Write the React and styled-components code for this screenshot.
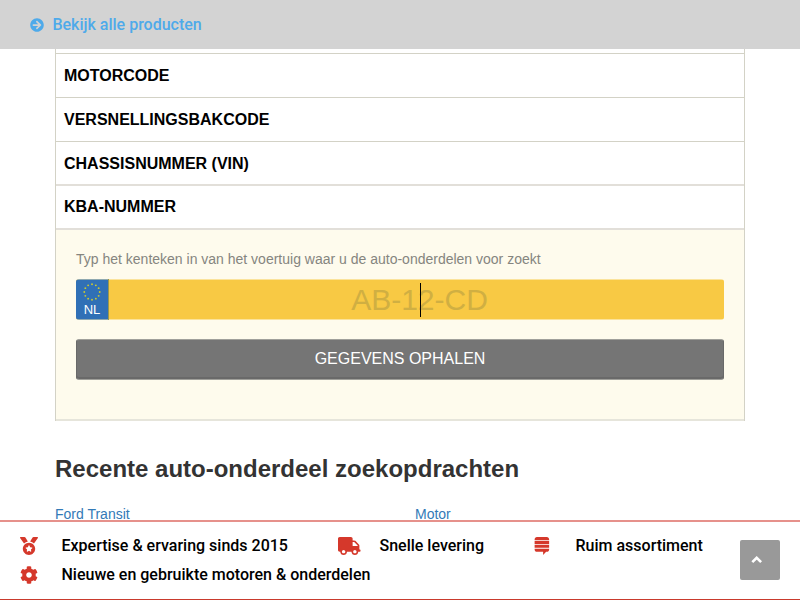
import React from "react";
import styled, { createGlobalStyle } from "styled-components";
import {
  FaArrowCircleRight,
  FaMedal,
  FaTruck,
  FaStackExchange,
  FaCog,
} from "react-icons/fa";

const GlobalStyle = createGlobalStyle`
  * { box-sizing: border-box; }
  body { margin: 0; background: #fff; overflow: hidden; }
`;

const Page = styled.div`
  width: 800px;
  height: 600px;
  overflow: hidden;
  display: flex;
  flex-direction: column;
  font-family: "Liberation Sans", Arial, sans-serif;
`;

const TopBar = styled.header`
  flex: 0 0 49px;
  display: flex;
  align-items: center;
  padding-left: 30px;
  background: #d3d3d3;
`;

const TopLink = styled.a`
  display: flex;
  align-items: center;
  gap: 8.4px;
  color: #4eaaea;
  font: 500 16px/20px Roboto, sans-serif;
`;

const Content = styled.main`
  flex: 0 0 471px;
  overflow: hidden;
  padding: 0 55px;
`;

const SearchBox = styled.section`
  height: 372px;
  display: flex;
  flex-direction: column;
  border: solid #d3d2c6;
  border-width: 0 1px;
`;

const Spacer = styled.div`
  flex: 0 0 5px;
  border-bottom: 1px solid #d3d2c6;
`;

const Tab = styled.div`
  flex: 0 0 44px;
  padding: ${(p) => p.$top ?? 2}px 0 0 8px;
  border-bottom: ${(p) => (p.$soft ? "2px solid #e2dfd9" : "1px solid #d3d2c6")};
  color: #000;
  font-size: 16px;
  font-weight: 700;
  line-height: 40px;
`;

const Panel = styled.div`
  flex: 1;
  padding: 19px 20px 0;
  background: #fefbed;
  border-bottom: 2px solid #e6e5db;
`;

const Hint = styled.p`
  margin: 0 0 10px;
  color: #85857f;
  font-size: 14px;
  line-height: 20px;
`;

const Plate = styled.div`
  display: flex;
  height: 41px;
  overflow: hidden;
  border-radius: 3px;
  background: linear-gradient(#fbe39b 1px, #f8c944 1px, #f8c944 40px, #fbe39b 40px);
`;

const Country = styled.div`
  flex: 0 0 33px;
  display: flex;
  flex-direction: column;
  align-items: center;
  padding-top: 4px;
  background: linear-gradient(#8fa9b0 1px, #3070b6 1px, #3070b6 40px, #8fa9b0 40px);
  border-right: 1px solid #97974e;
  color: #fff;
  font-size: 13px;
  line-height: 17px;
`;

const PlateField = styled.div`
  flex: 1;
  display: flex;
  align-items: center;
  justify-content: center;
  padding-right: 26px;
`;

const PlateText = styled.span`
  position: relative;
  display: block;
  margin-left: 32px;
  color: #d0af42;
  font-size: 30px;
  line-height: 40px;
`;

const Caret = styled.i`
  position: absolute;
  left: 69px;
  top: 3px;
  width: 1px;
  height: 34px;
  background: #000;
`;

const FetchButton = styled.button`
  display: block;
  width: 100%;
  height: 41px;
  margin: 19px 0 0;
  padding: 0 0 2px;
  border: 1px solid #696969;
  border-top-color: #a0a09b;
  border-bottom-color: #a0a09b;
  border-radius: 3px;
  background: #757575;
  box-shadow: inset 0 -2px 0 #696969;
  color: #fff;
  font: 16px/20px "Liberation Sans", Arial, sans-serif;
`;

const Heading = styled.h2`
  margin: 33px 0 0;
  color: #333;
  font-size: 24px;
  font-weight: 700;
  line-height: 30px;
`;

const Links = styled.div`
  display: grid;
  grid-template-columns: 360px 1fr;
  margin-top: 20px;
`;

const RecentLink = styled.a`
  color: #337ab7;
  font-size: 14px;
  line-height: 20px;
`;

const Footer = styled.footer`
  flex: 0 0 80px;
  display: flex;
  border-top: 2px solid #e6918b;
  border-bottom: 1px solid #c93a2d;
`;

const Benefits = styled.div`
  flex: 0 0 740px;
  display: grid;
  grid-template-columns: 318px 196px 1fr;
  grid-template-rows: 29px 29px;
  padding: 9px 0 0 20px;
`;

const Benefit = styled.div`
  display: grid;
  grid-template-columns: 41.5px 1fr;
  align-items: center;
  grid-column: ${(p) => (p.$wide ? "1 / -1" : "auto")};
  color: #000;
  font: 500 16px/29px Roboto, sans-serif;
  white-space: nowrap;

  svg {
    color: #d5382b;
    width: ${(p) => p.$icon || 18}px;
    height: 18px;
  }
`;

const ToTop = styled.button`
  width: 40px;
  height: 40px;
  margin-top: 18px;
  padding: 0 0 1px 11px;
  display: flex;
  align-items: center;
  border: 0;
  border-radius: 2px;
  background: #999;
  color: #fff;
`;

const stars = Array.from({ length: 12 }, (_, i) => {
  const a = (i * Math.PI) / 6;
  return [9 + 7.7 * Math.sin(a), 9 - 7.7 * Math.cos(a)];
});

function EuStars() {
  return (
    <svg width="18" height="18" viewBox="0 0 18 18">
      {stars.map(([x, y], i) => (
        <circle key={i} cx={x} cy={y} r="0.95" fill="#c9c832" />
      ))}
    </svg>
  );
}

function ChevronUp() {
  return (
    <svg width="12" height="8" viewBox="0 0 12 8">
      <path d="M1.3 6.2 5.7 1.8 10.1 6.2" fill="none" stroke="currentColor" strokeWidth="2.6" />
    </svg>
  );
}

export default function App() {
  return (
    <Page>
      <GlobalStyle />
      <TopBar>
        <TopLink>
          <FaArrowCircleRight size={14} />
          Bekijk alle producten
        </TopLink>
      </TopBar>
      <Content>
        <SearchBox>
          <Spacer />
          <Tab>MOTORCODE</Tab>
          <Tab>VERSNELLINGSBAKCODE</Tab>
          <Tab $soft>CHASSISNUMMER (VIN)</Tab>
          <Tab $soft $top={1}>KBA-NUMMER</Tab>
          <Panel>
            <Hint>Typ het kenteken in van het voertuig waar u de auto-onderdelen voor zoekt</Hint>
            <Plate>
              <Country>
                <EuStars />
                NL
              </Country>
              <PlateField>
                <PlateText>
                  AB-12-CD
                  <Caret />
                </PlateText>
              </PlateField>
            </Plate>
            <FetchButton>GEGEVENS OPHALEN</FetchButton>
          </Panel>
        </SearchBox>
        <Heading>Recente auto-onderdeel zoekopdrachten</Heading>
        <Links>
          <RecentLink>Ford Transit</RecentLink>
          <RecentLink>Motor</RecentLink>
        </Links>
      </Content>
      <Footer>
        <Benefits>
          <Benefit><FaMedal />Expertise &amp; ervaring sinds 2015</Benefit>
          <Benefit $icon={22.5}><FaTruck />Snelle levering</Benefit>
          <Benefit $icon={15.75}><FaStackExchange />Ruim assortiment</Benefit>
          <Benefit $wide><FaCog />Nieuwe en gebruikte motoren &amp; onderdelen</Benefit>
        </Benefits>
        <ToTop aria-label="Naar boven"><ChevronUp /></ToTop>
      </Footer>
    </Page>
  );
}
